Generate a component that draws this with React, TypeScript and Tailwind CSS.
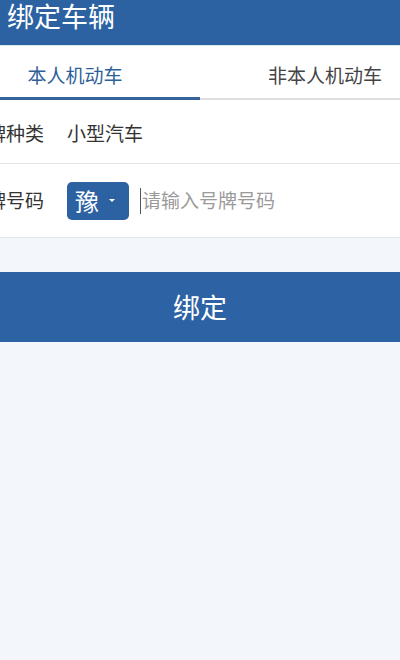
import React from "react";

const font = { fontFamily: '"Noto Sans CJK SC", "Noto Sans", sans-serif' };

export default function App() {
  return (
    <div className="w-[400px] h-[660px] overflow-hidden bg-[#f3f6fa]" style={font}>
      <div className="w-[500px] -ml-[50px]">
        <div className="h-[46px] bg-[#2c62a2] border-b border-[#dfe7f1] pl-[57px]">
          <div className="text-[27px] leading-[32px] text-white">绑定车辆</div>
        </div>
        <div className="flex bg-white h-[54px]">
          <div className="flex-1 h-[54px] border-b-[3px] border-[#36629a] pt-[7px] flex items-center justify-center text-[19px] text-[#2f5f98]">
            本人机动车
          </div>
          <div className="flex-1 h-[54px] border-b-2 border-[#dedede] pt-[6px] flex items-center justify-center text-[19px] text-[#444]">
            非本人机动车
          </div>
        </div>
        <div className="bg-white">
          <div className="h-[64px] border-b border-[#e4e4e4] flex items-center pt-[3px] pl-[18px] text-[19px] text-[#333]">
            <span className="w-[99px]">号牌种类</span>
            <span>小型汽车</span>
          </div>
          <div className="h-[74px] border-b border-[#e4e4e4] flex items-center pl-[18px] text-[19px] text-[#333]">
            <span className="w-[99px]">号牌号码</span>
            <div className="w-[62px] h-[38px] rounded-[5px] bg-[#2c62a2] flex items-center pl-[8px] text-white">
              <span className="text-[24px] leading-none">豫</span>
              <span className="ml-[10px] w-0 h-0 border-l-[3px] border-r-[3px] border-t-[3px] border-l-transparent border-r-transparent border-t-white"></span>
            </div>
            <div className="ml-[11px] flex items-center">
              <span className="w-px h-[26px] bg-[#555]"></span>
              <span className="ml-[1px] text-[#9a9a9a]">请输入号牌号码</span>
            </div>
          </div>
        </div>
        <div className="mt-[34px] h-[70px] bg-[#2d63a4] flex items-center justify-center text-white text-[27px]">
          绑定
        </div>
      </div>
    </div>
  );
}
